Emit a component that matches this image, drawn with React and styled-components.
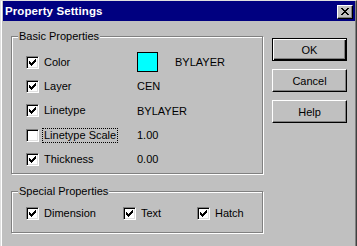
import React from 'react'
import styled, { createGlobalStyle } from 'styled-components'

const GlobalStyle = createGlobalStyle`
    html, body { margin: 0; padding: 0; background: #c0c0c0; }
    body {
        font-family: "Liberation Sans", Arial, sans-serif;
        font-size: 11px;
        color: #000;
    }
`

const basicRows = [
    { label: 'Color', checked: true, swatch: true, value: 'BYLAYER', h: 24 },
    { label: 'Layer', checked: true, value: 'CEN', h: 24 },
    { label: 'Linetype', checked: true, value: 'BYLAYER', h: 25 },
    { label: 'Linetype Scale', checked: false, value: '1.00', focus: true, h: 24 },
    { label: 'Thickness', checked: true, value: '0.00', h: 24 },
]

const specials = [
    { label: 'Dimension', w: 97 },
    { label: 'Text', w: 74 },
    { label: 'Hatch', w: 60 },
]

function CheckMark() {
    // classic 7x7 pixel check
    return (
        <svg width="7" height="7" viewBox="0 0 7 7" shapeRendering="crispEdges">
            <path fill="#000" d="M6 0h1v1h-1zM5 1h2v1h-2zM0 2h1v1h-1zM4 2h3v1h-3zM0 3h2v1h-2zM3 3h3v1h-3zM0 4h5v1h-5zM1 5h3v1h-3zM2 6h1v1h-1z" />
        </svg>
    )
}

function CloseGlyph() {
    return (
        <svg width="8" height="7" viewBox="0 0 8 7" shapeRendering="crispEdges">
            <path fill="#000" d="M0 0h2v1h-2zM6 0h2v1h-2zM1 1h2v1h-2zM5 1h2v1h-2zM2 2h4v1h-4zM3 3h2v1h-2zM2 4h4v1h-4zM1 5h2v1h-2zM5 5h2v1h-2zM0 6h2v1h-2zM6 6h2v1h-2z" />
        </svg>
    )
}

function CheckBox({ checked }) {
    return <Box>{checked && <CheckMark />}</Box>
}

export default function App() {
    return (
        <Window>
            <GlobalStyle />
            <TitleBar>
                <Title>Property Settings</Title>
                <CloseButton><CloseGlyph /></CloseButton>
            </TitleBar>
            <Body>
                <Groups>
                    <Group $height={138} $pad="13px 0 2px 14px">
                        <Legend>Basic Properties</Legend>
                        {basicRows.map((r) => (
                            <Row key={r.label} $h={r.h}>
                                <CheckCell>
                                    <CheckBox checked={r.checked} />
                                    <Label $focus={r.focus}>{r.label}</Label>
                                </CheckCell>
                                {r.swatch && <Swatch />}
                                <Value $gap={r.swatch ? 17 : 0}>{r.value}</Value>
                            </Row>
                        ))}
                    </Group>
                    <Group $height={42} $pad="9px 0 7px 14px">
                        <Legend>Special Properties</Legend>
                        <Row $h={24}>
                            {specials.map((s) => (
                                <SpecialItem key={s.label} $w={s.w}>
                                    <CheckBox checked />
                                    <Label>{s.label}</Label>
                                </SpecialItem>
                            ))}
                        </Row>
                    </Group>
                </Groups>
                <Buttons>
                    <Button $default>OK</Button>
                    <Button>Cancel</Button>
                    <Button>Help</Button>
                </Buttons>
            </Body>
        </Window>
    )
}

const Window = styled.div`
    width: 357px;
    height: 246px;
    box-sizing: border-box;
    background: #c0c0c0;
    border-top: 1px solid #dfdfdf;
    border-left: 1px solid #dfdfdf;
    border-right: 1px solid #404040;
    box-shadow: inset 1px 0 0 #fff, inset -1px 0 0 #808080;
    padding: 0 1px 0 2px;
    display: flex;
    flex-direction: column;
`

const TitleBar = styled.div`
    height: 20px;
    background: #000080;
    display: flex;
    align-items: center;
    justify-content: space-between;
    padding: 0 2px;
`

const Title = styled.span`
    color: #fff;
    font-weight: bold;
    font-size: 11.5px;
    letter-spacing: 0.1px;
`

const CloseButton = styled.div`
    width: 16px;
    height: 14px;
    box-sizing: border-box;
    margin-top: 1px;
    background: #c0c0c0;
    border: 1px solid;
    border-color: #fff #000 #000 #fff;
    box-shadow: inset -1px -1px 0 #808080;
    display: flex;
    align-items: center;
    justify-content: center;
    padding-right: 1px;
`

const Body = styled.div`
    display: flex;
    align-items: flex-start;
    padding: 15px 0 0 8px;
`

const Groups = styled.div`
    display: flex;
    flex-direction: column;
    gap: 17px;
`

const Group = styled.div`
    position: relative;
    width: 252px;
    height: ${props => props.$height}px;
    box-sizing: border-box;
    border: 1px solid #808080;
    box-shadow: inset 1px 1px 0 #fff, 1px 1px 0 #fff;
    padding: ${props => props.$pad};
`

const Legend = styled.span`
    position: absolute;
    top: -7px;
    left: 6px;
    padding: 0 1px;
    background: #c0c0c0;
    line-height: 13px;
`

const Row = styled.div`
    display: flex;
    align-items: center;
    height: ${props => props.$h}px;
`

const CheckCell = styled.div`
    display: flex;
    align-items: center;
    width: 111px;
`

const SpecialItem = styled.div`
    display: flex;
    align-items: center;
    width: ${props => props.$w}px;
`

const Box = styled.div`
    width: 13px;
    height: 13px;
    box-sizing: border-box;
    flex: none;
    background: #fff;
    border: 1px solid;
    border-color: #808080 #fff #fff #808080;
    box-shadow: inset 1px 1px 0 #000, inset -1px -1px 0 #dfdfdf;
    padding: 2px 0 0 2px;
    display: flex;
    align-items: flex-start;
`

const Label = styled.span`
    margin-left: 3px;
    padding: 0 1px;
    line-height: 13px;
    border: 1px dotted ${props => props.$focus ? '#000' : 'transparent'};
`

const Swatch = styled.div`
    width: 21px;
    height: 20px;
    box-sizing: border-box;
    background: #00ffff;
    border: 1px solid #000;
`

const Value = styled.span`
    margin-left: ${props => props.$gap}px;
`

const Buttons = styled.div`
    display: flex;
    flex-direction: column;
    gap: 8px;
    margin: 2px 0 0 9px;
`

const Button = styled.div`
    width: 75px;
    height: 23px;
    box-sizing: border-box;
    display: flex;
    align-items: center;
    justify-content: center;
    border: 1px solid;
    border-color: ${props => props.$default ? '#000' : '#fff #000 #000 #fff'};
    box-shadow: ${props => props.$default
        ? 'inset 1px 1px 0 #fff, inset -1px -1px 0 #000, inset -2px -2px 0 #808080'
        : 'inset -1px -1px 0 #808080'};
`
